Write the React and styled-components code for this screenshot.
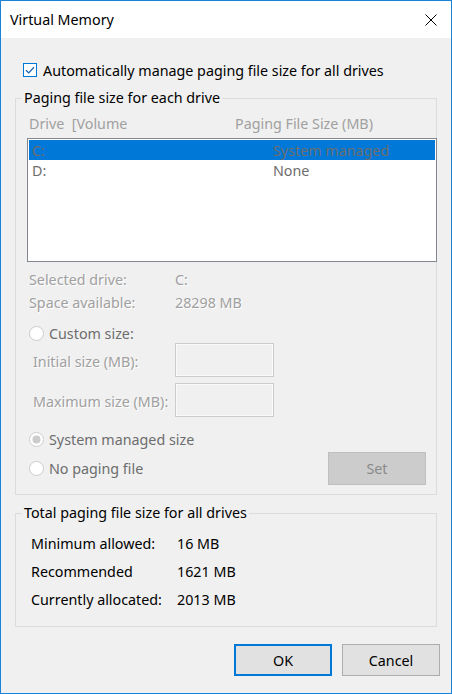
import React from "react"
import styled, { createGlobalStyle } from "styled-components"

const GlobalStyle = createGlobalStyle`
  html, body {
    margin: 0;
    padding: 0;
    background: #f0f0f0;
  }
  body {
    font-family: "Noto Sans", "Open Sans", sans-serif;
    font-size: 14.3px;
    color: #000;
  }
`

const drives = [
  { name: "C:", size: "System managed", selected: true },
  { name: "D:", size: "None" },
]

const totals = [
  ["Minimum allowed:", "16 MB"],
  ["Recommended", "1621 MB"],
  ["Currently allocated:", "2013 MB"],
]

const CloseIcon = () => (
  <svg width="12" height="12" viewBox="0 0 12 12">
    <path d="M0.5 0.5 L11.5 11.5 M11.5 0.5 L0.5 11.5" stroke="#000" strokeWidth="1" fill="none" />
  </svg>
)

const Check = () => (
  <svg width="14" height="14" viewBox="0 0 14 14">
    <rect x="0.5" y="0.5" width="13" height="13" fill="#fff" stroke="#0078d7" />
    <path d="M3 7.2 L5.7 9.9 L11 4.2" stroke="#1a64b8" strokeWidth="1.3" fill="none" />
  </svg>
)

const Radio = ({ checked }) => (
  <svg width="15" height="15" viewBox="0 0 15 15">
    <circle cx="7.5" cy="7.5" r="7" fill="#fff" stroke="#cccccc" />
    {checked && <circle cx="7.5" cy="7.5" r="4" fill="#cccccc" />}
  </svg>
)

const App = () => {
  return (
    <>
      <GlobalStyle />
      <Window>
        <TitleBar>
          <span>Virtual Memory</span>
          <CloseIcon />
        </TitleBar>

        <Body>
          <CheckRow>
            <Check />
            <span>Automatically manage paging file size for all drives</span>
          </CheckRow>

          <Group $top={8}>
            <Legend>Paging file size for each drive</Legend>
            <GroupBody $pad="6px 0 9px 11px">
              <ListHeader>
                <HeaderCol>Drive  [Volume</HeaderCol>
                <span>Paging File Size (MB)</span>
              </ListHeader>
              <List>
                {drives.map((d) => (
                  <ListRow key={d.name} $selected={d.selected}>
                    <DriveCol>{d.name}</DriveCol>
                    <span>{d.size}</span>
                  </ListRow>
                ))}
              </List>

              <InfoGrid>
                <InfoLabel>Selected drive:</InfoLabel>
                <InfoValue>C:</InfoValue>
                <InfoLabel>Space available:</InfoLabel>
                <InfoValue>28298 MB</InfoValue>
              </InfoGrid>

              <RadioRow $top={9}>
                <Radio />
                <span>Custom size:</span>
              </RadioRow>
              <SizeRow $top={0}>
                <SizeLabel>Initial size (MB):</SizeLabel>
                <TextBox />
              </SizeRow>
              <SizeRow $top={6}>
                <SizeLabel>Maximum size (MB):</SizeLabel>
                <TextBox />
              </SizeRow>
              <RadioRow $top={12}>
                <Radio checked />
                <span>System managed size</span>
              </RadioRow>
              <BottomRow>
                <RadioRow $top={0}>
                  <Radio />
                  <span>No paging file</span>
                </RadioRow>
                <SetButton>Set</SetButton>
              </BottomRow>
            </GroupBody>
          </Group>

          <Group $top={8}>
            <Legend>Total paging file size for all drives</Legend>
            <GroupBody $pad="6px 0 13px 15px">
              <TotalsGrid>
                {totals.map(([label, value]) => (
                  <React.Fragment key={label}>
                    <span>{label}</span>
                    <span>{value}</span>
                  </React.Fragment>
                ))}
              </TotalsGrid>
            </GroupBody>
          </Group>
        </Body>

        <Footer>
          <Button $primary>OK</Button>
          <Button>Cancel</Button>
        </Footer>
      </Window>
    </>
  )
}

export default App

const Window = styled.div`
  width: 452px;
  height: 694px;
  box-sizing: border-box;
  border: 1px solid #1883d7;
  background: #f0f0f0;
  display: flex;
  flex-direction: column;
`

const TitleBar = styled.div`
  height: 37px;
  flex-shrink: 0;
  background: #fff;
  display: flex;
  align-items: center;
  justify-content: space-between;
  padding: 0 14px 0 9px;
`

const Body = styled.div`
  padding: 0 14px;
  display: flex;
  flex-direction: column;
`

const CheckRow = styled.label`
  margin: 22px 0 0 8px;
  height: 20px;
  display: flex;
  align-items: center;
  gap: 6px;
`

const Group = styled.fieldset`
  margin: ${(p) => p.$top}px 0 0;
  padding: 0;
  min-width: 0;
  border: 1px solid #dcdcdc;
`

const Legend = styled.legend`
  margin-left: 6px;
  padding: 0 2px;
  line-height: 20px;
`

const GroupBody = styled.div`
  padding: ${(p) => p.$pad};
  display: flex;
  flex-direction: column;
`

const ListHeader = styled.div`
  display: flex;
  height: 20px;
  line-height: 20px;
  padding-left: 2px;
  color: #a0a0a0;
`

const HeaderCol = styled.span`
  width: 206px;
  white-space: pre;
`

const List = styled.div`
  margin-top: 4px;
  width: 410px;
  height: 124px;
  box-sizing: border-box;
  border: 1px solid #828790;
  background: #fff;
  padding: 1px;
`

const ListRow = styled.div`
  height: 20px;
  display: flex;
  align-items: center;
  padding-left: 3px;
  color: #6d6d6d;
  background: ${(p) => (p.$selected ? "#0078d7" : "transparent")};
`

const DriveCol = styled.span`
  width: 241px;
`

const InfoGrid = styled.div`
  margin-top: 6px;
  display: grid;
  grid-template-columns: 146px auto;
  grid-auto-rows: 23px;
  align-items: center;
  padding-left: 2px;
  color: #a0a0a0;
  text-shadow: 1px 1px 0 #fff;
`

const InfoLabel = styled.span``

const InfoValue = styled.span``

const RadioRow = styled.div`
  margin-top: ${(p) => p.$top}px;
  height: 20px;
  display: flex;
  align-items: center;
  gap: 5px;
  padding-left: 2px;
  color: #6d6d6d;
`

const SizeRow = styled.div`
  margin-top: ${(p) => p.$top}px;
  display: flex;
  align-items: center;
`

const SizeLabel = styled.span`
  width: 142px;
  padding: 3px 0 0 6px;
  color: #a0a0a0;
  text-shadow: 1px 1px 0 #fff;
`

const TextBox = styled.div`
  width: 99px;
  height: 34px;
  box-sizing: border-box;
  border: 1px solid #cccccc;
  box-shadow: inset 0 0 0 1px #fafafa;
  background: #f0f0f0;
`

const BottomRow = styled.div`
  margin-top: 3px;
  height: 33px;
  display: flex;
  align-items: center;
  justify-content: space-between;
  padding-right: 10px;
`

const SetButton = styled.div`
  width: 98px;
  height: 33px;
  box-sizing: border-box;
  border: 1px solid #bfbfbf;
  background: #cccccc;
  color: #8a8a8a;
  display: flex;
  align-items: center;
  justify-content: center;
`

const TotalsGrid = styled.div`
  display: grid;
  grid-template-columns: 146px auto;
  grid-auto-rows: 28px;
  align-items: center;
`

const Footer = styled.div`
  display: flex;
  justify-content: flex-end;
  gap: 10px;
  padding: 17px 11px 0 0;
`

const Button = styled.div`
  width: 98px;
  height: 32px;
  box-sizing: border-box;
  border: ${(p) => (p.$primary ? "2px solid #0078d7" : "1px solid #adadad")};
  background: #e1e1e1;
  display: flex;
  align-items: center;
  justify-content: center;
`
